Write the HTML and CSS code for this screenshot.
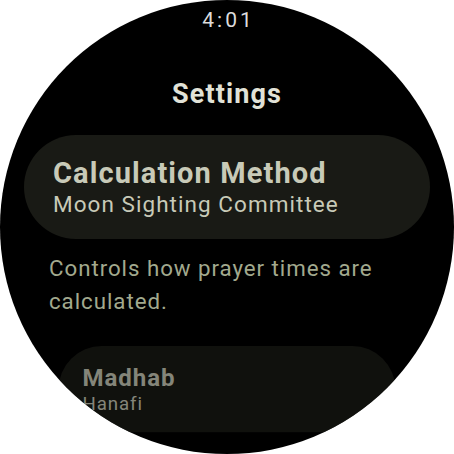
FILE: index.html
```html
<!DOCTYPE html>
<html>
<head>
<meta charset="utf-8">
<link rel="stylesheet" href="styles.css">
</head>
<body>
<div class="watch">
  <div class="time">4:01</div>
  <h1 class="heading">Settings</h1>
  <div class="chip">
    <div class="chip-title">Calculation Method</div>
    <div class="chip-sub">Moon Sighting Committee</div>
  </div>
  <p class="desc">Controls how prayer times are calculated.</p>
  <div class="chip chip-far">
    <div class="chip-title">Madhab</div>
    <div class="chip-sub">Hanafi</div>
  </div>
</div>
</body>
</html>
```
FILE: styles.css
```css
html, body {
  margin: 0;
  padding: 0;
  background: #ffffff;
}
body {
  width: 454px;
  height: 454px;
  overflow: hidden;
  font-family: Roboto, "Liberation Sans", sans-serif;
}
.watch {
  width: 454px;
  height: 454px;
  border-radius: 50%;
  background: #000000;
  overflow: hidden;
  display: flex;
  flex-direction: column;
  align-items: stretch;
}
.time {
  margin-top: 8px;
  height: 24px;
  line-height: 24px;
  font-size: 21px;
  letter-spacing: 3px;
  text-indent: 3px;
  text-align: center;
  color: #dcdcdc;
}
.heading {
  margin: 46px 0 0;
  line-height: 32px;
  font-size: 27px;
  letter-spacing: 1.1px;
  font-weight: 700;
  text-align: center;
  color: #e1e2d7;
}
.chip {
  margin: 25px 24px 0;
  flex: none;
  padding: 21px 29px 22px;
  border-radius: 52px;
  background: #191a15;
}
.chip-title {
  font-size: 29px;
  line-height: 35px;
  letter-spacing: 1.1px;
  font-weight: 700;
  color: #c8cab8;
  white-space: nowrap;
}
.chip-sub {
  font-size: 22.5px;
  line-height: 26px;
  letter-spacing: 1.05px;
  color: #c8cab8;
  white-space: nowrap;
}
.desc {
  margin: 13px 40px 0 49px;
  font-size: 22.3px;
  line-height: 33px;
  letter-spacing: 0.95px;
  color: #a2a98e;
}
.chip-far {
  margin-top: 28px;
  transform: scale(0.83);
  transform-origin: center top;
  opacity: 0.66;
}
```
